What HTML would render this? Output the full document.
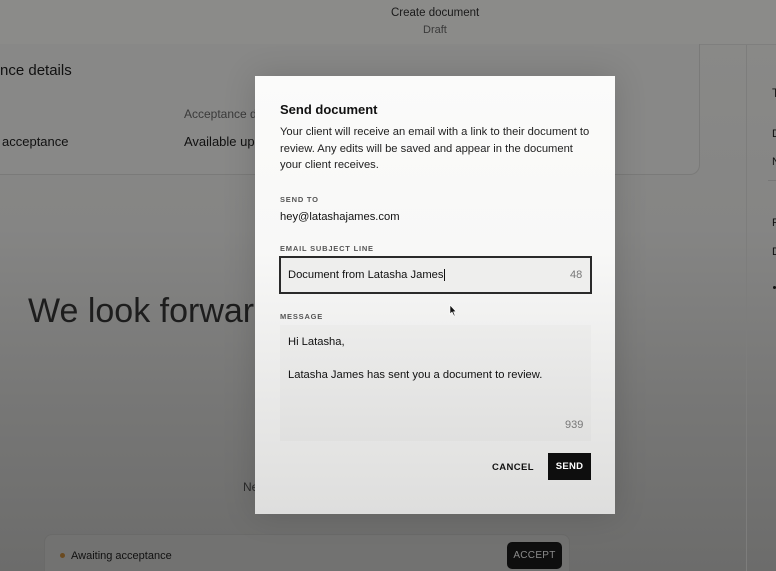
<!DOCTYPE html>
<html style="width:776px;height:571px;overflow:hidden"><head><style>
*{margin:0;padding:0;box-sizing:border-box}
body{width:776px;height:571px;overflow:hidden;position:relative;font-family:"Liberation Sans",sans-serif;background:linear-gradient(180deg,#8a8a88 0%,#858584 40%,#777776 70%,#6c6c6b 100%);color:#111}
.abs{position:absolute;white-space:nowrap}
</style></head><body>
<div class="abs" style="left:0;top:0;width:776px;height:45px;background:#8b8b89;border-bottom:1px solid #7f7f7e"></div>
<div class="abs" style="left:391px;top:7px;font-size:11.5px;color:#1a1a1a">Create document</div>
<div class="abs" style="left:423px;top:24px;font-size:11px;color:#3a3a3a">Draft</div>
<div class="abs" style="left:-20px;top:44px;width:720px;height:131px;border:1px solid #7a7a79;border-top:none;border-radius:0 0 10px 10px;background:#888887"></div>
<div class="abs" style="left:0;top:62px;font-size:15px;color:#111">nce details</div>
<div class="abs" style="left:184px;top:107px;font-size:12px;color:#3a3a3a">Acceptance d</div>
<div class="abs" style="left:2px;top:134px;font-size:13px;color:#111">acceptance</div>
<div class="abs" style="left:184px;top:134px;font-size:13px;color:#111">Available up</div>
<div class="abs" style="left:746px;top:45px;width:1px;height:526px;background:#7d7d7c"></div>
<div class="abs" style="left:772px;top:86px;font-size:12px">T</div>
<div class="abs" style="left:772px;top:128px;font-size:11px">D</div>
<div class="abs" style="left:772px;top:156px;font-size:11px">N</div>
<div class="abs" style="left:768px;top:180px;width:8px;height:1px;background:#777"></div>
<div class="abs" style="left:772px;top:217px;font-size:11px">P</div>
<div class="abs" style="left:772px;top:246px;font-size:11px">D</div>
<div class="abs" style="left:773px;top:286px;width:3px;height:3px;background:#111;border-radius:50%"></div>
<div class="abs" style="left:28px;top:292px;font-size:34px;color:#1d1d1d">We look forwar</div>
<div class="abs" style="left:243px;top:480px;font-size:12px;color:#2a2a2a">Ne</div>
<div class="abs" style="left:44px;top:534px;width:526px;height:37px;border-radius:8px 8px 0 0;background:#727271;border:1px solid #6a6a69;border-bottom:none"></div>
<div class="abs" style="left:60px;top:553px;width:5px;height:5px;border-radius:50%;background:#6a4a20"></div>
<div class="abs" style="left:71px;top:550px;font-size:11px;color:#111">Awaiting acceptance</div>
<div class="abs" style="left:507px;top:542px;width:55px;height:27px;border-radius:5px;background:#0e0e0e;color:#8a8a8a;font-size:10px;text-align:center;line-height:27px;letter-spacing:.3px">ACCEPT</div>

<div class="abs" style="left:255px;top:76px;width:360px;height:438px;background:linear-gradient(180deg,#fbfbfa 0%,#f8f8f7 40%,#e8e8e7 75%,#dededd 100%);box-shadow:0 0 30px rgba(0,0,0,.15)"></div>
<div class="abs" style="left:280px;top:102px;font-size:13px;font-weight:bold;color:#111">Send document</div>
<div class="abs" style="left:280px;top:124px;font-size:11.2px;line-height:16.7px;color:#222;white-space:normal;width:312px">Your client will receive an email with a link to their document to review. Any edits will be saved and appear in the document your client receives.</div>
<div class="abs" style="left:280px;top:195px;font-size:7.5px;letter-spacing:.8px;color:#555;font-weight:bold">SEND TO</div>
<div class="abs" style="left:280px;top:211px;font-size:11.2px;color:#111">hey@latashajames.com</div>
<div class="abs" style="left:280px;top:244px;font-size:7.5px;letter-spacing:.8px;color:#555;font-weight:bold">EMAIL SUBJECT LINE</div>
<div class="abs" style="left:279px;top:256px;width:313px;height:38px;border:2px solid #2a2a2a;background:#eeeeed"></div>
<div class="abs" style="left:288px;top:269px;font-size:11.2px;color:#111">Document from Latasha James<span style="border-left:1px solid #111;margin-left:1px"></span></div>
<div class="abs" style="left:570px;top:269px;font-size:11px;color:#777">48</div>
<div class="abs" style="left:280px;top:312px;font-size:7.5px;letter-spacing:.8px;color:#555;font-weight:bold">MESSAGE</div>
<div class="abs" style="left:280px;top:325px;width:311px;height:116px;background:linear-gradient(180deg,#ececeb,#e0e0df)"></div>
<div class="abs" style="left:288px;top:336px;font-size:11.2px;color:#111">Hi Latasha,</div>
<div class="abs" style="left:288px;top:369px;font-size:11.2px;color:#111">Latasha James has sent you a document to review.</div>
<div class="abs" style="left:565px;top:419px;font-size:11px;color:#777">939</div>
<svg class="abs" style="left:449px;top:304px" width="8" height="13" viewBox="0 0 8 13"><path d="M1 1 L1 10 L3 8 L5 12 L6 11.5 L4.5 7.8 L7 7.5 Z" fill="#111" stroke="#fff" stroke-width=".6"/></svg>
<div class="abs" style="left:492px;top:462px;font-size:9.5px;font-weight:bold;color:#111;letter-spacing:.4px">CANCEL</div>
<div class="abs" style="left:548px;top:453px;width:43px;height:27px;background:#0e0e0e;color:#fff;font-size:9.5px;font-weight:bold;text-align:center;line-height:27px;letter-spacing:.3px">SEND</div>
</body></html>
